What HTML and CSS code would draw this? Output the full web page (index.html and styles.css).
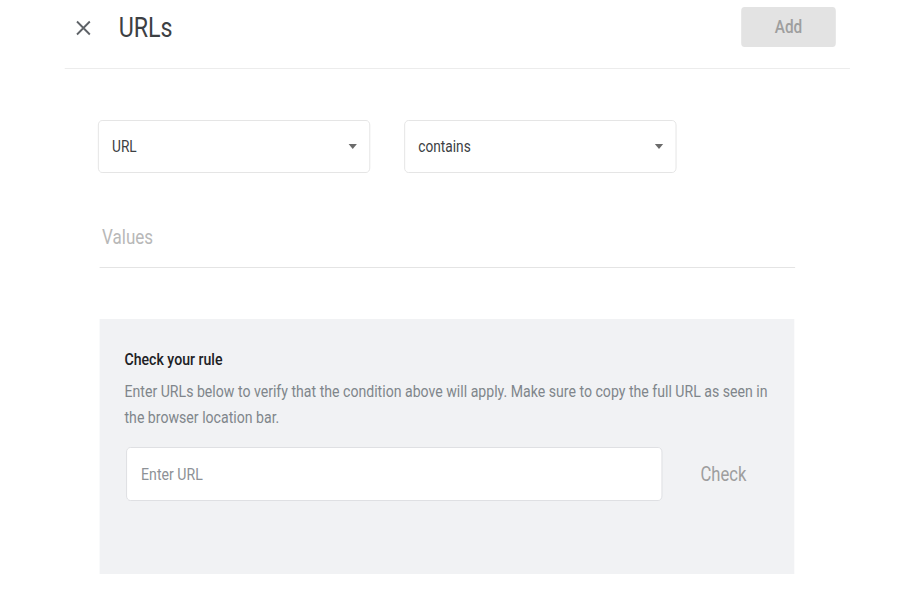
FILE: index.html
```html
<!DOCTYPE html>
<html>
<head>
<meta charset="utf-8">
<link rel="stylesheet" href="styles.css">
</head>
<body>
<div class="frame">
<div class="page">
  <header class="header">
    <div class="title-group">
      <svg class="close" viewBox="0 0 16 16" preserveAspectRatio="none" aria-hidden="true">
        <path d="M1.5 1.5 L14.5 14.5 M14.5 1.5 L1.5 14.5" stroke="#5f6368" stroke-width="1.9" fill="none"/>
      </svg>
      <h1 class="title">URLs</h1>
    </div>
    <button class="add-btn">Add</button>
  </header>

  <main class="content">
    <div class="selects">
      <div class="select">
        <span class="select-text">URL</span>
        <span class="arrow"></span>
      </div>
      <div class="select">
        <span class="select-text">contains</span>
        <span class="arrow"></span>
      </div>
    </div>

    <div class="values">Values</div>

    <section class="check-panel">
      <h2 class="check-title">Check your rule</h2>
      <p class="check-desc">Enter URLs below to verify that the condition above will apply. Make sure to copy the full URL as seen in the browser location bar.</p>
      <div class="check-row">
        <div class="url-input">Enter URL</div>
        <button class="check-btn">Check</button>
      </div>
    </section>
  </main>
</div>
</div>
</body>
</html>
```
FILE: styles.css
```css
html, body {
  margin: 0;
  padding: 0;
  background: #ffffff;
}

.frame {
  width: 900px;
  height: 600px;
  overflow: hidden;
}

.page {
  width: 1084px;
  height: 600px;
  transform: scaleX(0.83);
  transform-origin: 0 0;
  font-family: Roboto, "Noto Sans", sans-serif;
  color: #3c4043;
}

.header {
  margin-left: 78px;
  width: 946px;
  height: 69px;
  box-sizing: border-box;
  padding: 7px 17px 21px 13px;
  border-bottom: 1px solid #ececec;
  display: flex;
  align-items: center;
  justify-content: space-between;
}

.title-group {
  display: flex;
  align-items: center;
}

.close {
  width: 19px;
  height: 16px;
  display: block;
  margin-top: 2px;
}

.title {
  margin: 2px 0 0 33px;
  font-size: 28px;
  font-weight: 400;
  line-height: 40px;
  color: #3c4043;
}

.add-btn {
  width: 114px;
  height: 40px;
  border: none;
  border-radius: 4px;
  background: #e3e3e3;
  color: #9e9e9e;
  font-family: Roboto, sans-serif;
  font-size: 18.5px;
  font-weight: 500;
  padding: 0;
}

.content {
  margin-left: 118px;
  width: 840px;
  padding-top: 51px;
}

.selects {
  display: flex;
  gap: 41px;
}

.select {
  width: 328px;
  height: 53px;
  box-sizing: border-box;
  border: 1px solid #e2e2e2;
  border-radius: 5px;
  padding: 0 15px 0 16px;
  display: flex;
  align-items: center;
  justify-content: space-between;
}

.select-text {
  font-size: 16.5px;
  color: #3c4043;
}

.arrow {
  width: 0;
  height: 0;
  border-left: 5px solid transparent;
  border-right: 5px solid transparent;
  border-top: 5px solid #6b6b6b;
}

.values {
  margin: 39px 0 0 2px;
  width: 835px;
  padding: 13px 0 18px 3px;
  line-height: 24px;
  font-size: 20.5px;
  color: #b8b8b8;
  border-bottom: 1px solid #e4e4e4;
}

.check-panel {
  margin: 51px 0 0 2px;
  width: 837px;
  height: 255px;
  box-sizing: border-box;
  background: #f1f2f4;
  padding: 30px 26px 0 30px;
}

.check-title {
  margin: 0;
  font-size: 17px;
  font-weight: 500;
  line-height: 20px;
  color: #202124;
}

.check-desc {
  margin: 9px 0 0 0;
  font-size: 17px;
  line-height: 26px;
  color: #80868b;
}

.check-row {
  margin: 17px 0 0 2px;
  display: flex;
  align-items: center;
  gap: 46px;
}

.url-input {
  width: 646px;
  height: 54px;
  box-sizing: border-box;
  background: #ffffff;
  border: 1px solid #dcdde0;
  border-radius: 5px;
  padding: 0 17px;
  display: flex;
  align-items: center;
  font-size: 17px;
  color: #8d9196;
}

.check-btn {
  border: none;
  background: transparent;
  padding: 0;
  font-family: Roboto, sans-serif;
  font-size: 20px;
  color: #9e9e9e;
}
```
